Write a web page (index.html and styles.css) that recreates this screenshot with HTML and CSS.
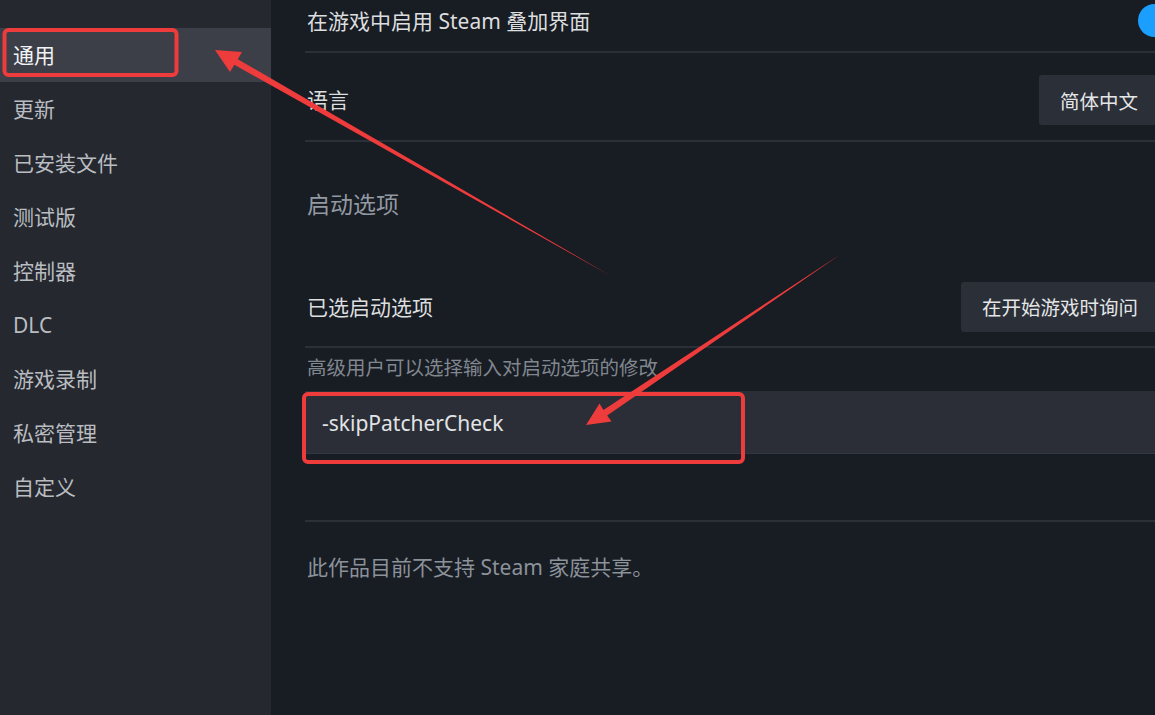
FILE: index.html
```html
<!DOCTYPE html>
<html lang="zh-CN">
<head>
<meta charset="utf-8">
<title>属性 - 通用</title>
<link rel="stylesheet" href="styles.css">
</head>
<body>
<div class="app">
  <nav class="sidebar">
    <div class="nav-item active">通用</div>
    <div class="nav-item">更新</div>
    <div class="nav-item">已安装文件</div>
    <div class="nav-item">测试版</div>
    <div class="nav-item">控制器</div>
    <div class="nav-item">DLC</div>
    <div class="nav-item">游戏录制</div>
    <div class="nav-item">私密管理</div>
    <div class="nav-item">自定义</div>
  </nav>
  <main class="main">
    <div class="row row-overlay">
      <span class="label">在游戏中启用 Steam 叠加界面</span>
      <span class="toggle"></span>
    </div>
    <div class="row row-lang">
      <span class="label">语言</span>
      <button class="btn btn-lang">简体中文</button>
    </div>
    <div class="section-title">启动选项</div>
    <div class="row row-launch">
      <span class="label">已选启动选项</span>
      <button class="btn btn-ask">在开始游戏时询问</button>
    </div>
    <div class="hint">高级用户可以选择输入对启动选项的修改</div>
    <div class="launch-input">-skipPatcherCheck</div>
    <div class="family-note">此作品目前不支持 Steam 家庭共享。</div>
  </main>
  <svg class="annotations" width="1155" height="715" viewBox="0 0 1155 715">
    <rect x="4.5" y="30" width="172" height="45" rx="4" fill="none" stroke="#ee3b3b" stroke-width="4"/>
    <rect x="304" y="394" width="439" height="68" rx="4" fill="none" stroke="#ee3b3b" stroke-width="4"/>
    <polygon fill="#ee3b3b" points="215,50 242,52 237.8,59.2 611,276 234.4,64.8 230,72"/>
    <polygon fill="#ee3b3b" points="586,425 611.5,421.5 607.2,415.4 841,254 603.4,410 599.5,403.5"/>
  </svg>
</div>
</body>
</html>
```
FILE: styles.css
```css
* { box-sizing: border-box; }
html, body { margin: 0; padding: 0; }
body {
  width: 1155px;
  height: 715px;
  overflow: hidden;
  background: #181c23;
  font-family: "Noto Sans", "Noto Sans CJK SC", sans-serif;
  color: #dcdedf;
}
.app {
  position: relative;
  display: flex;
  width: 1155px;
  height: 715px;
}
.sidebar {
  width: 271px;
  flex: none;
  background: #25282e;
  padding-top: 28px;
  display: flex;
  flex-direction: column;
}
.nav-item {
  height: 54px;
  line-height: 55px;
  padding-left: 13px;
  font-size: 21px;
  color: #b9bdc2;
}
.nav-item.active {
  background: #3c3f48;
  color: #f2f3f4;
}
.main {
  flex: 1;
  min-width: 0;
  overflow: hidden;
  padding-left: 34px;
  display: flex;
  flex-direction: column;
}
.row {
  display: flex;
  justify-content: space-between;
  align-items: center;
  border-bottom: 2px solid #2b3038;
}
.label {
  font-size: 21px;
  line-height: 28px;
  color: #dcdedf;
  padding-left: 2px;
}
.row-overlay {
  height: 53px;
  align-items: flex-start;
  padding-top: 4px;
}
.row-overlay .label { margin-top: 3px; }
.toggle {
  width: 60px;
  height: 33px;
  border-radius: 17px;
  background: #1a9fff;
  margin-right: -43px;
  flex: none;
}
.row-lang {
  height: 89px;
  padding-top: 22px;
  padding-bottom: 15px;
}
.btn {
  height: 50px;
  border: none;
  border-radius: 3px 0 0 3px;
  background: #2b2f37;
  color: #e4e6e8;
  font-family: inherit;
  font-size: 19.5px;
  padding: 0 19px 0 21px;
  flex: none;
}
.btn-lang { margin-right: -2px; }
.btn-ask { margin-right: -2px; }
.section-title {
  padding-top: 48px;
  line-height: 28px;
  font-size: 23px;
  color: #9299a1;
  padding-left: 2px;
}
.row-launch {
  height: 130px;
  padding-top: 64px;
  padding-bottom: 15px;
}
.hint {
  padding-top: 7px;
  line-height: 26px;
  font-size: 19.5px;
  color: #80878f;
  padding-left: 2px;
}
.launch-input {
  margin-top: 10px;
  height: 63px;
  background: #2b2e36;
  border-bottom: 1px solid #323843;
  padding-left: 17px;
  line-height: 64px;
  font-size: 21px;
  color: #e2e4e6;
}
.family-note {
  margin-top: 66px;
  border-top: 2px solid #2b3038;
  padding-top: 31px;
  line-height: 28px;
  font-size: 21px;
  color: #8b929a;
  padding-left: 2px;
}
.annotations {
  position: absolute;
  left: 0;
  top: 0;
  pointer-events: none;
}
```
